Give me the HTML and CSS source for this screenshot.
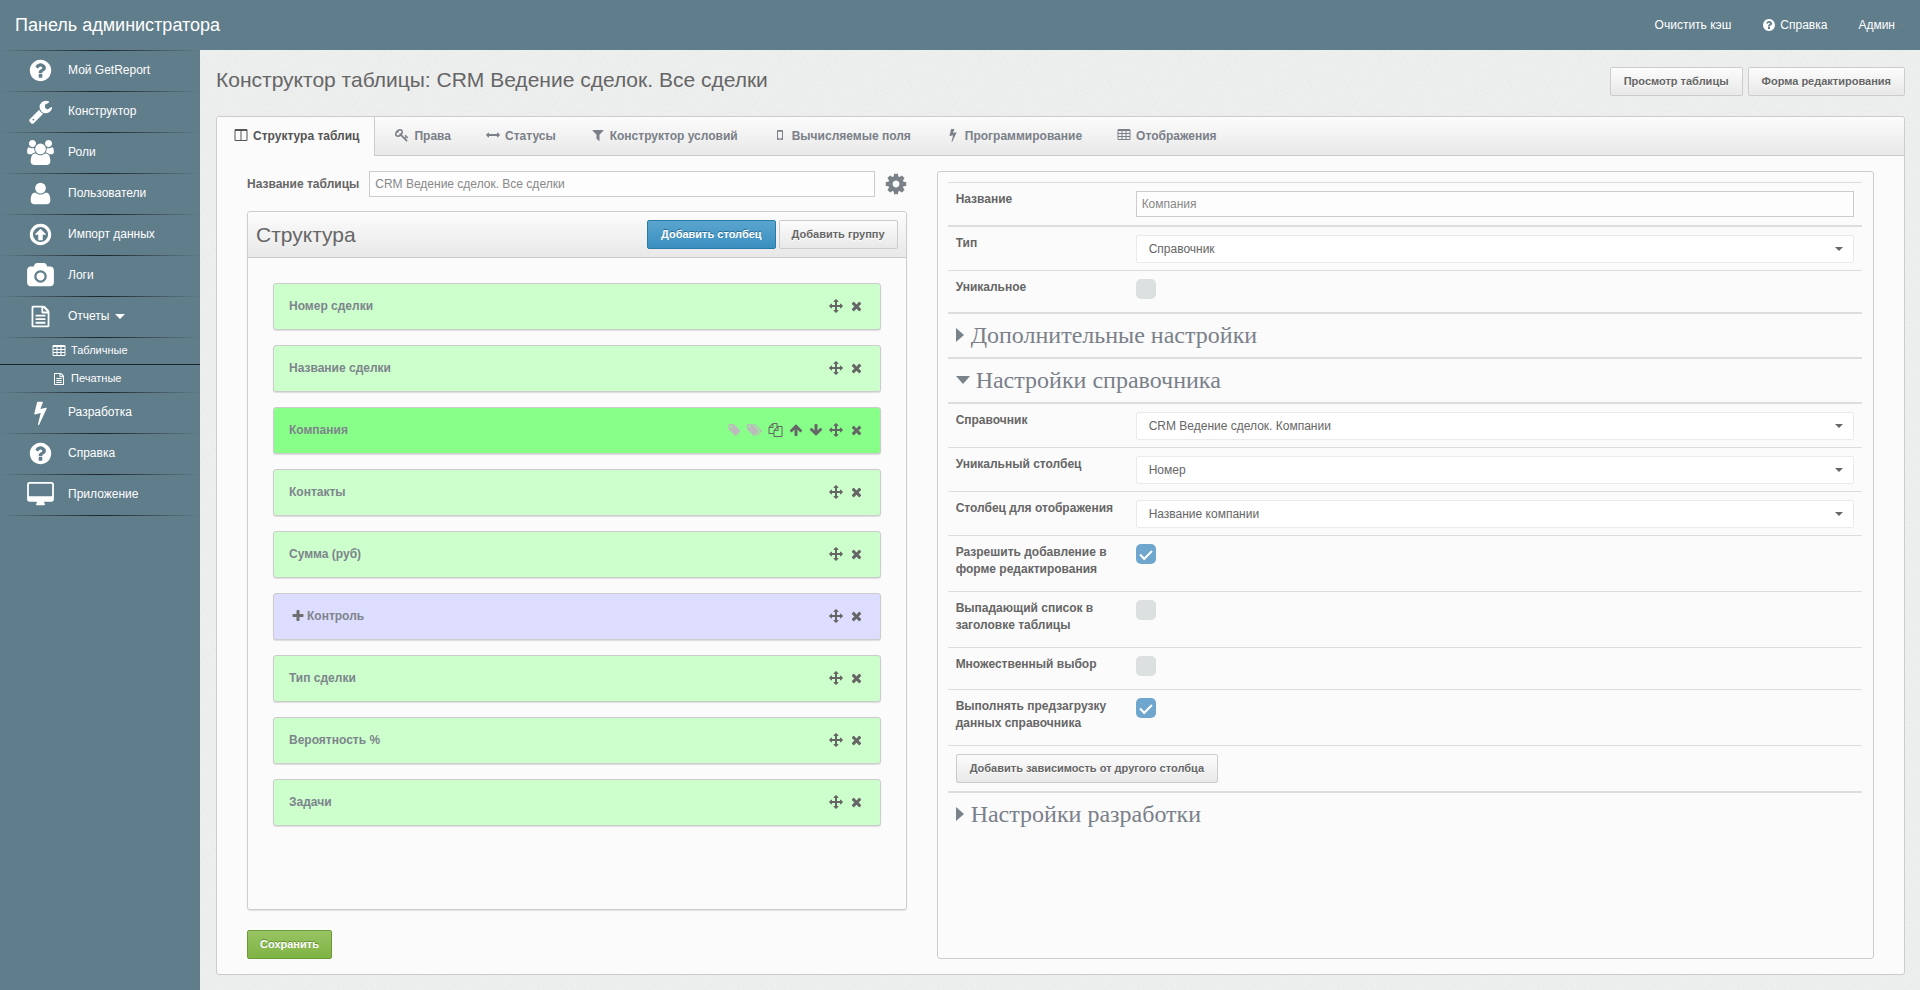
FILE: index.html
```html
<!DOCTYPE html>
<html lang="ru">
<head>
<meta charset="utf-8">
<title>Панель администратора</title>
<link rel="stylesheet" href="styles.css">
</head>
<body>
<svg class="sprite" aria-hidden="true">
  <symbol id="question" viewBox="0 0 1792 1792"><path d="M1024 1376v-192q0-14-9-23t-23-9h-192q-14 0-23 9t-9 23v192q0 14 9 23t23 9h192q14 0 23-9t9-23zm256-672q0-88-55.5-163t-138.5-116-170-41q-243 0-371 213-15 24 8 42l132 100q7 6 19 6 16 0 25-12 53-68 86-92 34-24 86-24 48 0 85.5 26t37.5 59q0 38-20 61t-68 45q-63 28-115.5 86.5t-52.5 125.5v36q0 14 9 23t23 9h192q14 0 23-9t9-23q0-19 21.5-49.5t54.5-49.5q32-18 49-28.5t46-35 44.5-48 28-60.5 12.5-81zm384 192q0 209-103 385.5t-279.5 279.5-385.5 103-385.5-103-279.5-279.5-103-385.5 103-385.5 279.5-279.5 385.5-103 385.5 103 279.5 279.5 103 385.5z"/></symbol>
  <symbol id="wrench" viewBox="0 0 1792 1792"><path d="M448 1472q0-26-19-45t-45-19-45 19-19 45 19 45 45 19 45-19 19-45zm644-420l-682 682q-37 37-90 37-52 0-91-37l-106-108q-38-36-38-90 0-53 38-91l681-681q39 98 114.5 173.5t173.5 114.5zm634-435q0 39-23 106-47 134-164.5 217.5t-258.5 83.5q-185 0-316.5-131.5t-131.5-316.5 131.5-316.5 316.5-131.5q58 0 121.5 16.5t107.5 46.5q16 11 16 28t-16 28l-293 169v224l193 107q5-3 79-48.5t135.5-81 70.5-35.5q15 0 23.5 10t8.5 25z"/></symbol>
  <symbol id="users" viewBox="64 0 1920 1792"><path d="M657 896q-162 5-265 128h-134q-82 0-138-40.5t-56-118.5q0-353 124-353 6 0 43.5 21t97.5 42.5 119 21.5q67 0 133-23-5 37-5 66 0 139 81 256zm1071 637q0 120-73 189.5t-194 69.5h-874q-121 0-194-69.5t-73-189.5q0-53 3.5-103.5t14-109 26.5-108.5 43-97.5 62-81 85.5-53.5 111.5-20q10 0 43 21.5t73 48 107 48 135 21.5 135-21.5 107-48 73-48 43-21.5q61 0 111.5 20t85.5 53.5 62 81 43 97.5 26.5 108.5 14 109 3.5 103.5zm-1024-1277q0 106-75 181t-181 75-181-75-75-181 75-181 181-75 181 75 75 181zm704 384q0 159-112.5 271.5t-271.5 112.5-271.5-112.5-112.5-271.5 112.5-271.5 271.5-112.5 271.5 112.5 112.5 271.5zm576 225q0 78-56 118.5t-138 40.5h-134q-103-123-265-128 81-117 81-256 0-29-5-66 66 23 133 23 59 0 119-21.5t97.5-42.5 43.5-21q124 0 124 353zm-128-609q0 106-75 181t-181 75-181-75-75-181 75-181 181-75 181 75 75 181z"/></symbol>
  <symbol id="user" viewBox="0 0 1792 1792"><path d="M1600 1399q0 121-73 193t-194 72h-874q-121 0-194-72t-73-193q0-85 8.5-160.5t31.5-152 58.5-131 94-89 134.5-34.5q10 0 43 21.5t73 48 107 48 154 21.5 154-21.5 107-48 73-48 43-21.5q76 0 134.500 34.500t94 89 58.500 131 31.500 152 8.500 160.500zm-320-887q0 159-112.500 271.500t-271.500 112.500-271.500-112.500-112.500-271.500 112.500-271.500 271.500-112.500 271.500 112.500 112.500 271.500z"/></symbol>
  <symbol id="import" viewBox="0 0 1792 1792"><path fill-rule="evenodd" d="M896 128a768 768 0 1 0 0 1536a768 768 0 1 0 0-1536zM896 352a544 544 0 1 1 0 1088a544 544 0 1 1 0-1088z"/><path d="M1284 897q-8 20-30 20h-198v351q0 14-9 23t-23 9h-256q-14 0-23-9t-9-23v-351H538q-22 0-30-20-7-19 7-35l358-350q10-9 23-9t23 9l358 350q14 16 7 35z"/></symbol>
  <symbol id="camera" viewBox="0 0 1920 1792"><path d="M960 672q119 0 203.500 84.500t84.500 203.500-84.500 203.500-203.500 84.500-203.500-84.500-84.500-203.500 84.500-203.500 203.500-84.500zm704-416q106 0 181 75t75 181v896q0 106-75 181t-181 75h-1408q-106 0-181-75t-75-181v-896q0-106 75-181t181-75h224l51-136q19-49 69.500-84.500t103.500-35.500h512q53 0 103.500 35.500t69.500 84.500l51 136h224zm-704 1152q185 0 316.500-131.500t131.500-316.500-131.500-316.500-316.500-131.500-316.500 131.500-131.500 316.500 131.500 316.500 316.500 131.500z"/></symbol>
  <symbol id="doc" viewBox="0 0 1792 1792"><path fill-rule="evenodd" d="M352 128h736q40 0 88 20t76 48l216 216q28 28 48 76t20 88v992q0 40-28 68t-68 28H352q-40 0-68-28t-28-68V224q0-40 28-68t68-28zM384 256v1280h1024V672h-352q-40 0-68-28t-28-68V256zM1088 264v280h280zM544 768h704v128H544zM544 1024h704v128H544zM544 1280h704v128H544z"/></symbol>
  <symbol id="bolt" viewBox="0 0 1792 1792"><path d="M1333 566q18 20 7 44l-540 1157q-13 25-42 25-4 0-14-2-17-5-25.500-19t-4.500-30l197-808-406 101q-4 1-12 1-18 0-31-11-18-15-13-39l201-825q4-14 16-23t28-9h328q19 0 32 12.500t13 29.500q0 8-5 18l-171 463 396-98q8-2 12-2 19 0 34 15z"/></symbol>
  <symbol id="desktop" viewBox="0 0 1920 1792"><path d="M1792 992v-832q0-13-9.500-22.500t-22.500-9.500h-1600q-13 0-22.500 9.500t-9.500 22.500v832q0 13 9.500 22.500t22.500 9.500h1600q13 0 22.500-9.500t9.500-22.500zm128-832v1088q0 66-47 113t-113 47h-544q0 37 16 77.500t32 71 16 43.500q0 26-19 45t-45 19h-512q-26 0-45-19t-19-45q0-14 16-44t32-70 16-78h-544q-66 0-113-47t-47-113v-1088q0-66 47-113t113-47h1600q66 0 113 47t47 113z"/></symbol>
  <symbol id="table" viewBox="0 0 1792 1792"><path fill-rule="evenodd" d="M224 128h1344q66 0 113 47t47 113v1088q0 66-47 113t-113 47H224q-66 0-113-47t-47-113V288q0-66 47-113t113-47zM192 384v256h384V384zM704 384v256h384V384zM1216 384v256h384V384zM192 768v256h384V768zM704 768v256h384V768zM1216 768v256h384V768zM192 1152v256h384v-256zM704 1152v256h384v-256zM1216 1152v256h384v-256z"/></symbol>
  <symbol id="columns" viewBox="0 0 1792 1792"><path fill-rule="evenodd" d="M224 128h1344q66 0 113 47t47 113v1216q0 66-47 113t-113 47H224q-66 0-113-47t-47-113V288q0-66 47-113t113-47zM192 384v1120q0 32 32 32h608V384zM960 384v1152h608q32 0 32-32V384z"/></symbol>
  <symbol id="key" viewBox="0 0 1792 1792"><path d="M832 512q0-80-56-136t-136-56-136 56-56 136q0 42 19 83-41-19-83-19-80 0-136 56t-56 136 56 136 136 56 136-56 56-136q0-42-19-83 41 19 83 19 80 0 136-56t56-136zm851 704q0 17-49 66t-66 49q-9 0-28.500-16t-36.500-33-38.500-40-24.500-26l-96 96 220 220q28 28 28 68 0 42-39 81t-81 39q-40 0-68-28l-671-671q-176 131-365 131-163 0-265.500-102.500t-102.500-265.500q0-160 95-313t248-248 313-95q163 0 265.500 102.500t102.500 265.500q0 189-131 365l355 355 96-96q-3-3-26-24.500t-40-38.500-33-36.500-16-28.500q0-17 49-66t66-49q13 0 23 10 6 6 46 44.500t82 79.500 86.500 86 73 78 28.500 41z"/></symbol>
  <symbol id="arrows-h" viewBox="0 0 1792 1792"><path d="M1792 896q0 26-19 45l-256 256q-19 19-45 19t-45-19-19-45v-128h-1024v128q0 26-19 45t-45 19-45-19l-256-256q-19-19-19-45t19-45l256-256q19-19 45-19t45 19 19 45v128h1024v-128q0-26 19-45t45-19 45 19l256 256q19 19 19 45z"/></symbol>
  <symbol id="filter" viewBox="0 0 1792 1792"><path d="M1595 295q17 41-14 70l-493 493v742q0 42-39 59-13 5-25 5-27 0-45-19l-256-256q-19-19-19-45v-486l-493-493q-31-29-14-70 17-39 59-39h1280q42 0 59 39z"/></symbol>
  <symbol id="mobile" viewBox="0 0 1792 1792"><path fill-rule="evenodd" d="M640 256h512q52 0 90 38t38 90v1024q0 52-38 90t-90 38H640q-52 0-90-38t-38-90V384q0-52 38-90t90-38zM640 480v832h512V480zM896 1344a80 80 0 1 0 0 160a80 80 0 1 0 0-160z"/></symbol>
  <symbol id="tag" viewBox="64 0 1664 1792"><path d="M576 448q0-53-37.500-90.500t-90.500-37.500-90.500 37.500-37.500 90.500 37.500 90.500 90.500 37.500 90.500-37.500 37.500-90.500zm1067 576q0 53-37 90l-491 492q-39 37-91 37-53 0-90-37l-715-716q-38-37-64.500-101t-26.500-117v-416q0-52 38-90t90-38h416q53 0 117 26.500t102 64.500l715 714q37 39 37 91z"/></symbol>
  <symbol id="tags" viewBox="128 0 1920 1792"><path d="M576 448q0-53-37.500-90.500t-90.500-37.500-90.500 37.500-37.500 90.500 37.500 90.500 90.500 37.500 90.500-37.500 37.500-90.500zm1067 576q0 53-37 90l-491 492q-39 37-91 37-53 0-90-37l-715-716q-38-37-64.500-101t-26.500-117v-416q0-52 38-90t90-38h416q53 0 117 26.500t102 64.500l715 714q37 39 37 91zm384 0q0 53-37 90l-491 492q-39 37-91 37-36 0-59-14t-53-45l470-470q37-37 37-90 0-52-37-91l-715-714q-38-38-102-64.500t-117-26.500h224q53 0 117 26.500t102 64.500l715 714q37 39 37 91z"/></symbol>
  <symbol id="copy" viewBox="0 0 1792 1792"><path d="M1696 384q40 0 68 28t28 68v1216q0 40-28 68t-68 28h-960q-40 0-68-28t-28-68v-288h-544q-40 0-68-28t-28-68v-672q0-40 20-88t48-76l408-408q28-28 76-48t88-20h416q40 0 68 28t28 68v328q68-40 128-40h416zm-544 213l-299 299h299v-299zm-640-384l-299 299h299v-299zm196 647l316-316v-416h-384v416q0 40-28 68t-68 28h-416v640h512v-256q0-40 20-88t48-76zm956 804v-1152h-384v416q0 40-28 68t-68 28h-416v640h896z"/></symbol>
  <symbol id="up" viewBox="0 0 1792 1792"><path d="M1675 971q0 51-37 90l-75 75q-38 38-91 38-54 0-90-38l-294-293v704q0 52-37.500 84.500t-90.500 32.500h-128q-53 0-90.500-32.500t-37.500-84.500v-704l-294 293q-36 38-90 38t-90-38l-75-75q-38-38-38-90 0-53 38-91l651-651q35-37 90-37 54 0 91 37l651 651q37 39 37 91z"/></symbol>
  <symbol id="down" viewBox="0 0 1792 1792"><path d="M1675 832q0 53-37 90l-651 652q-39 37-91 37-53 0-90-37l-651-652q-38-36-38-90 0-53 38-91l74-75q39-37 91-37 53 0 90 37l294 294v-704q0-52 38-90t90-38h128q52 0 90 38t38 90v704l294-294q37-37 90-37 52 0 91 37l75 75q37 39 37 91z"/></symbol>
  <symbol id="move" viewBox="0 0 1792 1792"><path d="M1792 896q0 26-19 45l-256 256q-19 19-45 19t-45-19-19-45v-128h-384v384h128q26 0 45 19t19 45-19 45l-256 256q-19 19-45 19t-45-19l-256-256q-19-19-19-45t19-45 45-19h128v-384h-384v128q0 26-19 45t-45 19-45-19l-256-256q-19-19-19-45t19-45l256-256q19-19 45-19t45 19 19 45v128h384v-384h-128q-26 0-45-19t-19-45 19-45l256-256q19-19 45-19t45 19l256 256q19 19 19 45t-19 45-45 19h-128v384h384v-128q0-26 19-45t45-19 45 19l256 256q19 19 19 45z"/></symbol>
  <symbol id="times" viewBox="192 0 1408 1792"><path d="M1490 1322q0 40-28 68l-136 136q-28 28-68 28t-68-28l-294-294-294 294q-28 28-68 28t-68-28l-136-136q-28-28-28-68t28-68l294-294-294-294q-28-28-28-68t28-68l136-136q28-28 68-28t68 28l294 294 294-294q28-28 68-28t68 28l136 136q28 28 28 68t-28 68l-294 294 294 294q28 28 28 68z"/></symbol>
  <symbol id="plus" viewBox="0 0 1792 1792"><path d="M1600 736v192q0 40-28 68t-68 28h-416v416q0 40-28 68t-68 28h-192q-40 0-68-28t-28-68v-416h-416q-40 0-68-28t-28-68v-192q0-40 28-68t68-28h416v-416q0-40 28-68t68-28h192q40 0 68 28t28 68v416h416q40 0 68 28t28 68z"/></symbol>
  <symbol id="cog" viewBox="0 0 1792 1792"><path d="M1152 896q0-106-75-181t-181-75-181 75-75 181 75 181 181 75 181-75 75-181zm512-109v222q0 12-8 23t-20 13l-185 28q-19 54-39 91 35 50 107 138 10 12 10 25t-9 23q-27 37-99 108t-94 71q-12 0-26-9l-138-108q-44 23-91 38-16 136-29 186-7 28-36 28h-222q-14 0-24.500-8.500t-11.500-21.500l-28-184q-49-16-90-37l-141 107q-10 9-25 9-14 0-25-11-126-114-165-168-7-10-7-23 0-12 8-23 15-21 51-66.500t54-70.500q-27-50-41-99l-183-27q-13-2-21-12.500t-8-23.500v-222q0-12 8-23t19-13l186-28q14-46 39-92-40-57-107-138-10-12-10-24 0-10 9-23 26-36 98.500-107.500t94.500-71.500q13 0 26 10l138 107q44-23 91-38 16-136 29-186 7-28 36-28h222q14 0 24.500 8.500t11.500 21.500l28 184q49 16 90 37l142-107q9-9 24-9 13 0 25 10 129 119 165 170 7 8 7 22 0 12-8 23-15 21-51 66.500t-54 70.500q26 50 41 98l183 28q13 2 21 12.500t8 23.500z"/></symbol>
</svg>

<header class="topbar">
  <div class="brand">Панель администратора</div>
  <nav class="topnav">
    <a href="#">Очистить кэш</a>
    <a href="#"><svg class="icon"><use href="#question"/></svg>Справка</a>
    <a href="#">Админ<span class="caret"></span></a>
  </nav>
</header>

<div class="app">
  <nav class="sidebar">
    <a class="nav-item" href="#"><svg class="nav-icon"><use href="#question"/></svg>Мой GetReport</a>
    <a class="nav-item" href="#"><svg class="nav-icon"><use href="#wrench"/></svg>Конструктор</a>
    <a class="nav-item" href="#"><svg class="nav-icon"><use href="#users"/></svg>Роли</a>
    <a class="nav-item" href="#"><svg class="nav-icon"><use href="#user"/></svg>Пользователи</a>
    <a class="nav-item" href="#"><svg class="nav-icon"><use href="#import"/></svg>Импорт данных</a>
    <a class="nav-item" href="#"><svg class="nav-icon"><use href="#camera"/></svg>Логи</a>
    <a class="nav-item" href="#"><svg class="nav-icon"><use href="#doc"/></svg>Отчеты<span class="nav-caret"></span></a>
    <div class="subnav">
      <a href="#"><svg class="icon"><use href="#table"/></svg>Табличные</a>
      <a href="#"><svg class="icon"><use href="#doc"/></svg>Печатные</a>
    </div>
    <a class="nav-item" href="#"><svg class="nav-icon"><use href="#bolt"/></svg>Разработка</a>
    <a class="nav-item" href="#"><svg class="nav-icon"><use href="#question"/></svg>Справка</a>
    <a class="nav-item last" href="#"><svg class="nav-icon"><use href="#desktop"/></svg>Приложение</a>
  </nav>

  <main class="main">
    <div class="page-head">
      <h1>Конструктор таблицы: CRM Ведение сделок. Все сделки</h1>
      <div class="page-actions">
        <button class="btn" type="button">Просмотр таблицы</button>
        <button class="btn" type="button">Форма редактирования</button>
      </div>
    </div>

    <section class="panel">
      <nav class="tabs">
        <a class="tab active" href="#"><svg class="icon"><use href="#columns"/></svg>Структура таблиц</a>
        <a class="tab" href="#"><svg class="icon"><use href="#key"/></svg>Права</a>
        <a class="tab" href="#"><svg class="icon"><use href="#arrows-h"/></svg>Статусы</a>
        <a class="tab" href="#"><svg class="icon"><use href="#filter"/></svg>Конструктор условий</a>
        <a class="tab" href="#"><svg class="icon"><use href="#mobile"/></svg>Вычисляемые поля</a>
        <a class="tab" href="#"><svg class="icon"><use href="#bolt"/></svg>Программирование</a>
        <a class="tab" href="#"><svg class="icon"><use href="#table"/></svg>Отображения</a>
      </nav>

      <div class="columns">
        <form class="editor">
          <div class="name-row">
            <label for="table-name">Название таблицы</label>
            <input class="text" id="table-name" type="text" value="CRM Ведение сделок. Все сделки">
            <button class="cog" type="button" aria-label="Настройки"><svg><use href="#cog"/></svg></button>
          </div>
          <div class="structure">
            <div class="structure-head">
              <h2>Структура</h2>
              <div class="structure-actions">
                <button class="btn blue" type="button">Добавить столбец</button>
                <button class="btn" type="button">Добавить группу</button>
              </div>
            </div>
            <ul class="items">
              <li class="item"><span>Номер сделки</span><svg class="icon"><use href="#move"/></svg><svg class="icon narrow"><use href="#times"/></svg></li>
              <li class="item"><span>Название сделки</span><svg class="icon"><use href="#move"/></svg><svg class="icon narrow"><use href="#times"/></svg></li>
              <li class="item selected"><span>Компания</span><svg class="icon pale small"><use href="#tag"/></svg><svg class="icon pale wide"><use href="#tags"/></svg><svg class="icon wide"><use href="#copy"/></svg><svg class="icon"><use href="#up"/></svg><svg class="icon"><use href="#down"/></svg><svg class="icon"><use href="#move"/></svg><svg class="icon narrow"><use href="#times"/></svg></li>
              <li class="item"><span>Контакты</span><svg class="icon"><use href="#move"/></svg><svg class="icon narrow"><use href="#times"/></svg></li>
              <li class="item"><span>Сумма (руб)</span><svg class="icon"><use href="#move"/></svg><svg class="icon narrow"><use href="#times"/></svg></li>
              <li class="item group"><span><svg class="icon"><use href="#plus"/></svg>Контроль</span><svg class="icon"><use href="#move"/></svg><svg class="icon narrow"><use href="#times"/></svg></li>
              <li class="item"><span>Тип сделки</span><svg class="icon"><use href="#move"/></svg><svg class="icon narrow"><use href="#times"/></svg></li>
              <li class="item"><span>Вероятность %</span><svg class="icon"><use href="#move"/></svg><svg class="icon narrow"><use href="#times"/></svg></li>
              <li class="item"><span>Задачи</span><svg class="icon"><use href="#move"/></svg><svg class="icon narrow"><use href="#times"/></svg></li>
            </ul>
          </div>
          <button class="btn green" type="submit">Сохранить</button>
        </form>

        <form class="settings">
          <div class="row"><label for="f-name">Название</label><input class="text" id="f-name" type="text" value="Компания"></div>
          <div class="row thick"><label for="f-type">Тип</label><div class="select"><select id="f-type"><option>Справочник</option></select></div></div>
          <div class="row"><label for="f-unique">Уникальное</label><input class="check" id="f-unique" type="checkbox"></div>
          <h3 class="section"><span class="arrow right"></span>Дополнительные настройки</h3>
          <h3 class="section"><span class="arrow open"></span>Настройки справочника</h3>
          <div class="row thick"><label for="f-ref">Справочник</label><div class="select"><select id="f-ref"><option>CRM Ведение сделок. Компании</option></select></div></div>
          <div class="row"><label for="f-key">Уникальный столбец</label><div class="select"><select id="f-key"><option>Номер</option></select></div></div>
          <div class="row"><label for="f-show">Столбец для отображения</label><div class="select"><select id="f-show"><option>Название компании</option></select></div></div>
          <div class="row"><label for="f-add">Разрешить добавление в форме редактирования</label><input class="check" id="f-add" type="checkbox" checked></div>
          <div class="row"><label for="f-drop">Выпадающий список в заголовке таблицы</label><input class="check" id="f-drop" type="checkbox"></div>
          <div class="row"><label for="f-multi">Множественный выбор</label><input class="check" id="f-multi" type="checkbox"></div>
          <div class="row"><label for="f-pre">Выполнять предзагрузку данных справочника</label><input class="check" id="f-pre" type="checkbox" checked></div>
          <div class="row action"><button class="btn" type="button">Добавить зависимость от другого столбца</button></div>
          <h3 class="section"><span class="arrow right"></span>Настройки разработки</h3>
        </form>
      </div>
    </section>
  </main>
</div>
</body>
</html>
```
FILE: styles.css
```css
* {
  box-sizing: border-box;
}

body {
  margin: 0;
  min-height: 100vh;
  display: flex;
  flex-direction: column;
  background: #f0f1f1 url("data:image/svg+xml,%3Csvg xmlns='http://www.w3.org/2000/svg' width='200' height='200'%3E%3Cfilter id='n'%3E%3CfeTurbulence type='fractalNoise' baseFrequency='.7' numOctaves='2' stitchTiles='stitch'/%3E%3CfeColorMatrix values='0 0 0 0 0 0 0 0 0 0 0 0 0 0 0 .05 0 0 0 -.01'/%3E%3C/filter%3E%3Crect width='200' height='200' filter='url(%23n)'/%3E%3C/svg%3E");
  color: #666;
  font: 12px/17px "Liberation Sans", Arial, sans-serif;
}

h1, h2, h3, ul {
  margin: 0;
  padding: 0;
  font-weight: normal;
}

a {
  color: inherit;
  text-decoration: none;
}

svg {
  display: block;
  fill: currentColor;
}

.sprite {
  position: absolute;
  width: 0;
  height: 0;
}

.icon {
  flex: none;
  width: 14px;
  height: 14px;
}

/* Top bar */

.topbar {
  display: flex;
  align-items: center;
  justify-content: space-between;
  height: 50px;
  padding: 0 15px;
  background: #607d8b;
  color: #fff;
}

.brand {
  font-size: 18px;
}

.topnav {
  display: flex;
  gap: 31px;
}

.topnav a {
  display: flex;
  align-items: center;
  gap: 4px;
}

.caret {
  border: 3px solid transparent;
  border-top-color: #6b7f89;
  border-bottom: 0;
}

/* Sidebar */

.app {
  flex: 1;
  display: flex;
}

.sidebar {
  flex: none;
  width: 200px;
  background: #607d8b;
  color: #fff;
}

.nav-item {
  display: flex;
  align-items: center;
  gap: 14px;
  height: 41px;
  padding: 0 0 0 27px;
  background: linear-gradient(90deg, #607d8b, #1c2529 50%, #607d8b) top / 100% 1px no-repeat;
}

.nav-item.last {
  height: 42px;
  padding-bottom: 1px;
  background:
    linear-gradient(90deg, #607d8b, #1c2529 50%, #607d8b) top / 100% 1px no-repeat,
    linear-gradient(90deg, #607d8b, #1c2529 50%, #607d8b) bottom / 100% 1px no-repeat;
}

.nav-icon {
  width: 27px;
  height: 25px;
}

.nav-caret {
  margin-left: -8px;
  border: 5px solid transparent;
  border-top-color: #fff;
  border-bottom: 0;
}

.subnav {
  background: linear-gradient(90deg, #607d8b, #1c2529 50%, #607d8b) top / 100% 1px no-repeat;
  font-size: 11px;
}

.subnav a {
  display: flex;
  align-items: center;
  gap: 5px;
  height: 27px;
  padding-left: 52px;
}

.subnav a + a {
  height: 28px;
  border-top: 1px solid #1c2529;
}

/* Page */

.main {
  flex: 1;
  min-width: 0;
  display: flex;
  flex-direction: column;
  padding: 17px 15px 15px 16px;
}

.page-head {
  display: flex;
  justify-content: space-between;
  margin-bottom: 20px;
}

.page-head h1 {
  font-size: 21px;
  line-height: 26px;
}

.page-actions {
  display: flex;
  gap: 5px;
}

.btn {
  height: 29px;
  padding: 0 12px;
  border: 1px solid #ccc;
  border-radius: 2px;
  background: linear-gradient(#fcfcfc, #e8e8e8);
  color: #666;
  font: bold 11px/17px "Liberation Sans", Arial, sans-serif;
  text-shadow: 0 1px 0 #fff;
}

.page-actions .btn,
.row .btn {
  padding: 0 13px;
}

.btn.blue {
  padding: 0 13px;
  border-color: #2a7aa8;
  background: linear-gradient(#5aa5cf, #3a8fc0);
  color: #fff;
  text-shadow: 0 -1px 0 #2a6a90;
}

.btn.green {
  align-self: flex-start;
  border-color: #6c9a35;
  background: linear-gradient(#98c464, #7fb343);
  color: #fff;
  text-shadow: 0 -1px 0 #5f8a2f;
}

.panel {
  flex: 1;
  display: flex;
  flex-direction: column;
  border: 1px solid #ccc;
  border-radius: 3px;
  background: #fbfbfb;
}

.tabs {
  display: flex;
  height: 39px;
  gap: 3px;
  border-bottom: 1px solid #ccc;
  border-radius: 3px 3px 0 0;
  background: linear-gradient(#fcfcfc, #e8e8e8);
  color: #7a7f88;
  font-weight: bold;
}

.tab {
  display: flex;
  align-items: center;
  gap: 5px;
  padding: 0 15px 0 17px;
}

.tab .icon {
  margin-bottom: 2px;
}

.tab.active {
  height: 39px;
  padding-bottom: 1px;
  border-right: 1px solid #ccc;
  border-radius: 3px 0 0 0;
  background: #fbfbfb;
  color: #555;
}

.columns {
  flex: 1;
  display: grid;
  grid-template-columns: 19fr 27fr;
  gap: 30px;
  padding: 15px 30px;
}

.editor {
  display: flex;
  flex-direction: column;
  min-width: 0;
}

.name-row {
  display: flex;
  align-items: center;
  gap: 10px;
  margin-bottom: 14px;
  font-weight: bold;
}

.text {
  flex: 1;
  min-width: 0;
  height: 26px;
  padding: 0 5px;
  border: 1px solid #ccc;
  background: #fdfdfd;
  color: #888;
  font: 12px/17px "Liberation Sans", Arial, sans-serif;
}

.cog {
  padding: 0;
  border: 0;
  background: none;
  color: #7a8188;
}

.cog svg {
  width: 24px;
  height: 24px;
  margin: 0 -1px;
}

.structure {
  flex: 1;
  margin-bottom: 20px;
  border: 1px solid #ccc;
  border-radius: 3px;
  box-shadow: 0 1px 1px #e4e4e4;
}

.structure-head {
  display: flex;
  align-items: center;
  justify-content: space-between;
  height: 46px;
  padding: 0 8px;
  border-bottom: 1px solid #ccc;
  border-radius: 3px 3px 0 0;
  background: linear-gradient(#fcfcfc, #e8e8e8);
}

.structure-head h2 {
  font-size: 21px;
  line-height: 26px;
}

.structure-actions {
  display: flex;
  gap: 3px;
}

.items {
  display: flex;
  flex-direction: column;
  gap: 15px;
  padding: 25px;
  list-style: none;
}

.item {
  display: flex;
  align-items: center;
  gap: 6px;
  height: 47px;
  padding: 0 18px 0 15px;
  border: 1px solid #ccc;
  border-radius: 3px;
  box-shadow: 0 1px 1px #ddd;
  background: #cfc;
  font-weight: bold;
}

.item .icon {
  margin-bottom: 2px;
}

.item span {
  flex: 1;
  display: flex;
  align-items: center;
  gap: 2px;
  color: #7e848c;
}

.item span .icon {
  margin-left: 2px;
  color: #6e6e6e;
}

.item.selected {
  background: #8f8;
}

.item.group {
  background: #ddf;
}

.item .icon.pale {
  color: #bbb;
}

.icon.narrow {
  width: 11px;
  margin-left: 2px;
}

.icon.small {
  width: 13px;
}

.icon.wide {
  width: 15px;
}

/* Column settings */

.settings {
  min-width: 0;
  padding: 10px 11px 10px 10px;
  border: 1px solid #ccc;
  border-radius: 3px;
}

.row {
  display: grid;
  grid-template-columns: 170px 1fr;
  column-gap: 10px;
  align-items: start;
  padding: 8px 8px 0;
  border-top: 1px solid #ddd;
}

.row.thick {
  border-top-width: 2px;
}

.row label {
  margin-bottom: 13px;
  font-weight: bold;
}

.row .text {
  margin-bottom: 8px;
}

.row.action {
  grid-template-columns: max-content;
  padding-bottom: 8px;
}

.select {
  position: relative;
  margin-bottom: 7px;
}

.select::after {
  content: "";
  position: absolute;
  top: 12px;
  right: 11px;
  border: 4px solid transparent;
  border-top-color: #666;
  border-bottom: 0;
}

.select select {
  display: block;
  width: 100%;
  height: 28px;
  padding: 0 12px;
  appearance: none;
  border: 1px solid #eaeaea;
  border-radius: 2px;
  background: #fff;
  color: #666;
  font: 12px/17px "Liberation Sans", Arial, sans-serif;
}

.check {
  display: grid;
  place-items: center;
  width: 20px;
  height: 20px;
  margin: 0 0 13px;
  appearance: none;
  border-radius: 5px;
  background: #dce0e0;
}

.check:checked {
  background: #6ea6cd;
}

.check:checked::after {
  content: "";
  box-sizing: border-box;
  width: 12px;
  height: 7px;
  margin-bottom: 2px;
  border: solid #fff;
  border-width: 0 0 2px 2px;
  transform: rotate(-45deg);
}

.section {
  display: flex;
  align-items: center;
  gap: 7px;
  height: 45px;
  padding: 0 8px 2px;
  border-top: 2px solid #ddd;
  color: #7a808a;
  font: 24px/28px "Liberation Serif", "Times New Roman", serif;
}

.arrow {
  border: 7px solid transparent;
}

.arrow.right {
  border-left: 8px solid #7a828a;
  border-right: 0;
}

.arrow.open {
  margin-right: -1px;
  border-top: 8px solid #7a828a;
  border-bottom: 0;
}
```
